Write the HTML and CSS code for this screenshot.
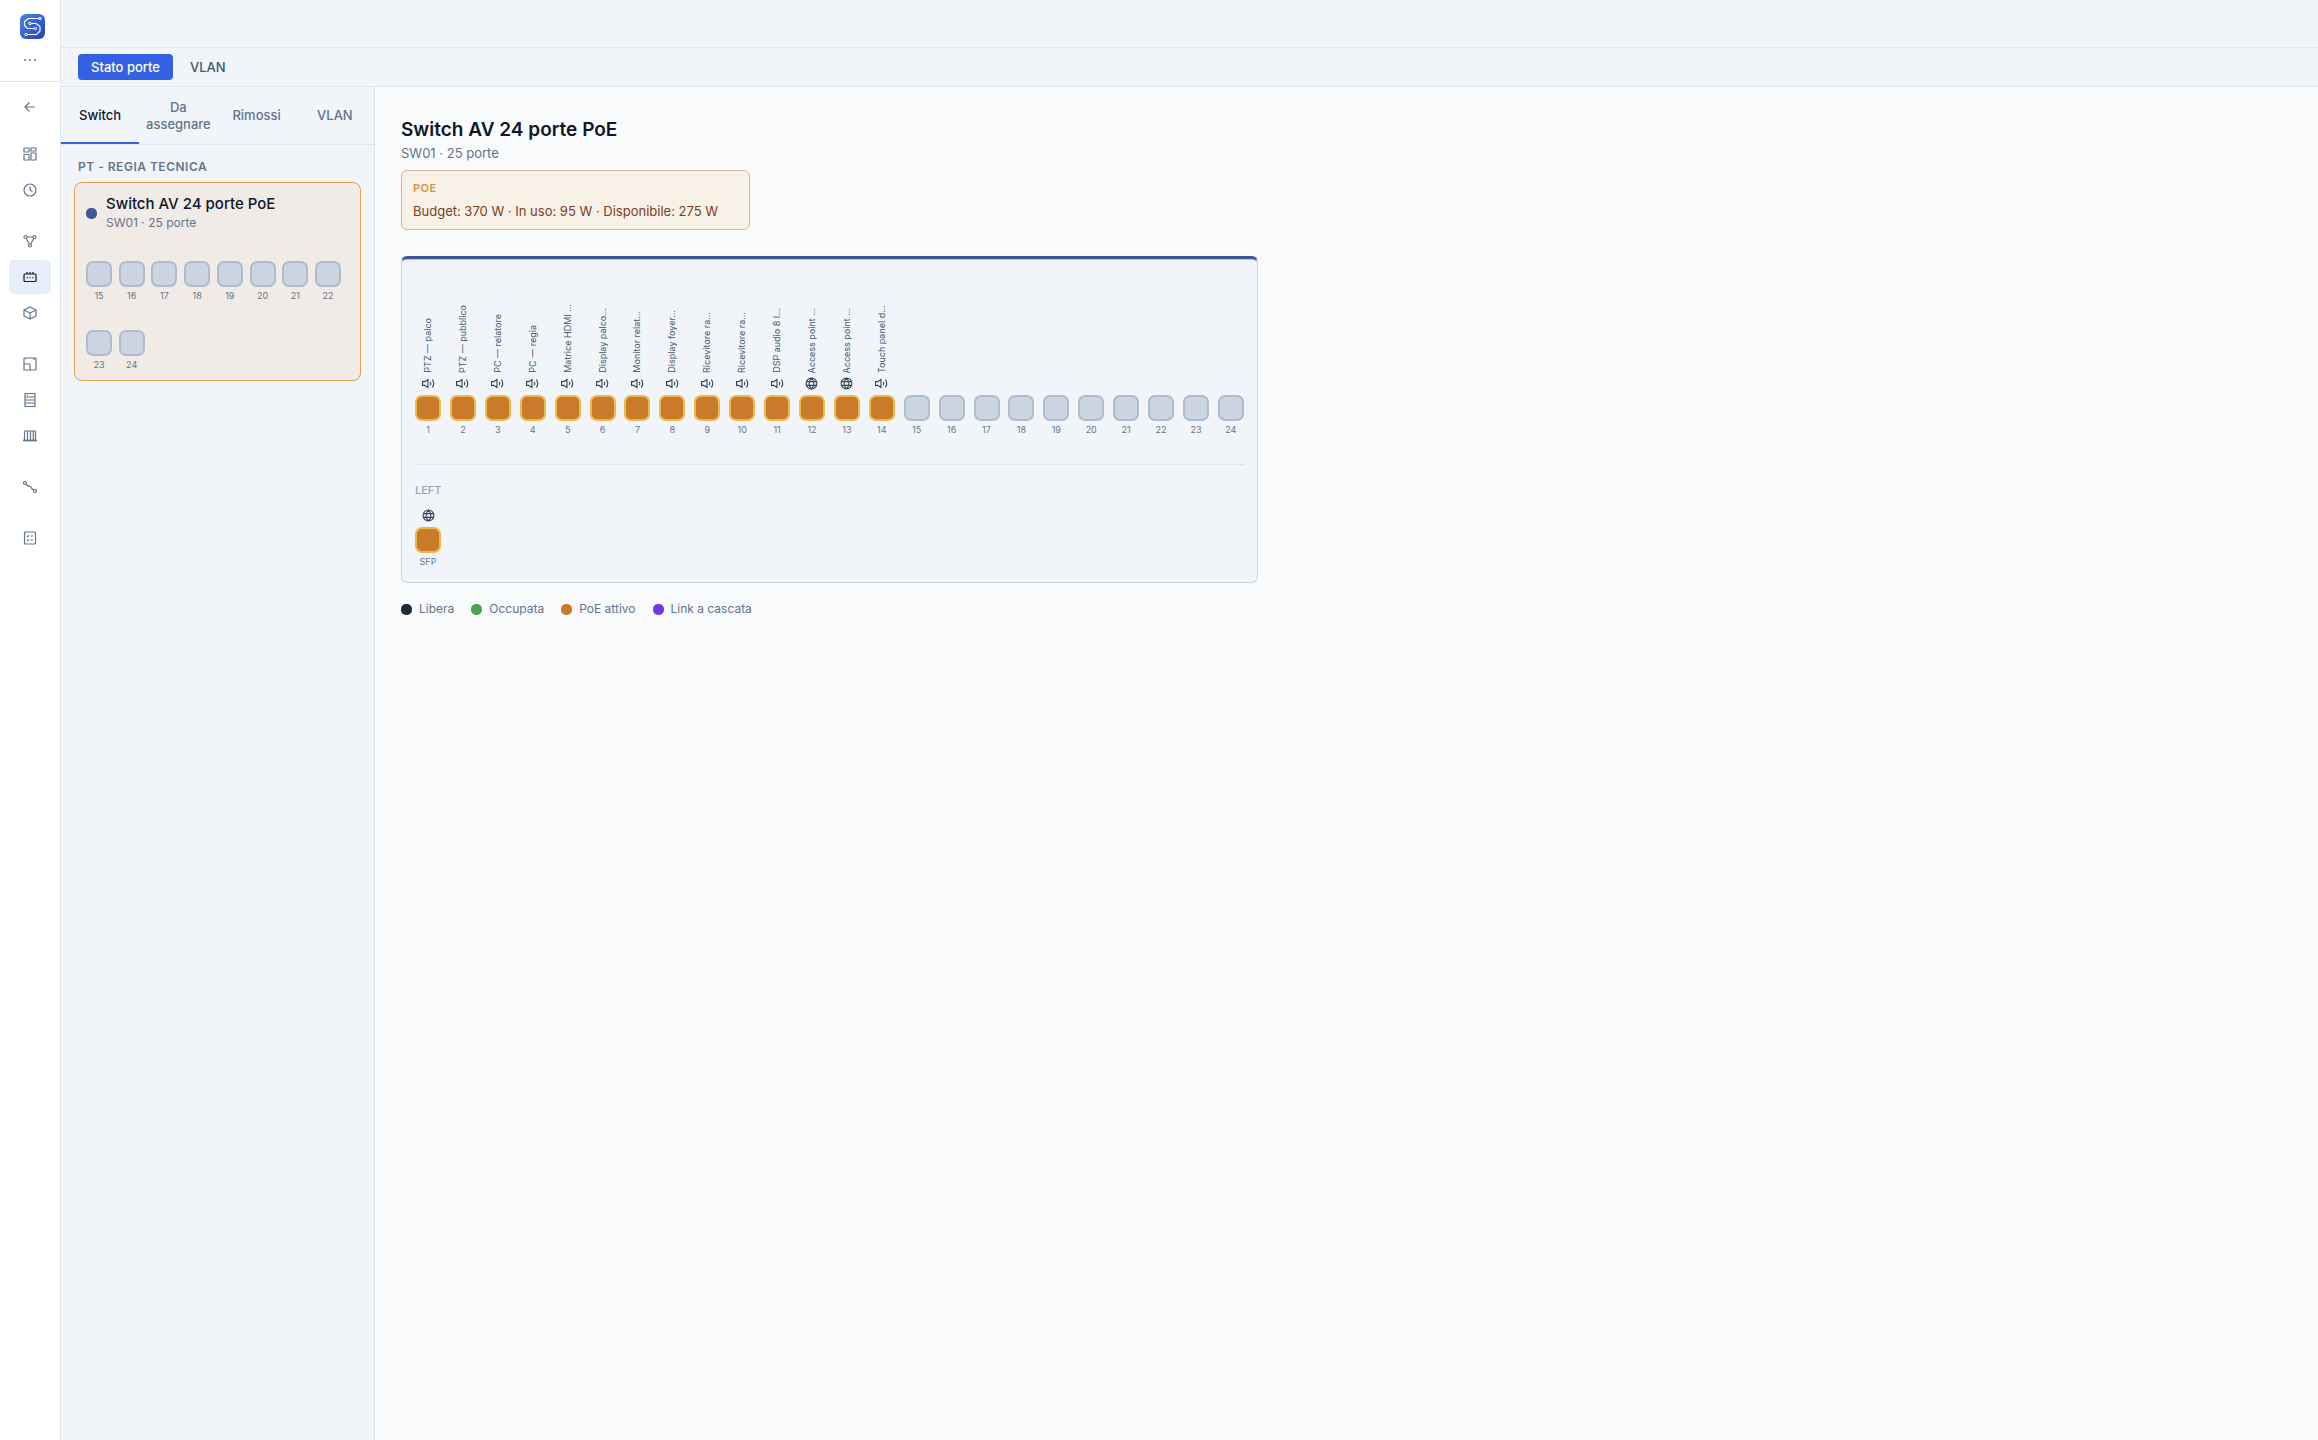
FILE: index.html
```
<!DOCTYPE html>
<html lang="it">
<head>
    <meta charset="UTF-8">
    <meta name="viewport" content="width=device-width, initial-scale=1.0">
    <title>Switch - Stato porte</title>

    <link rel="stylesheet" href="styles.css">
</head>
<body>
    <!-- simboli usati sopra le porte -->
    <svg class="symbols" aria-hidden="true">
        <symbol id="speaker" viewBox="0 0 24 24">
            <path d="M1 8.500h4l6-4v15l-6-4H1z"/>
            <path d="M15 9q2.500 3 0 6M19 5q5.500 7 0 14"/>
        </symbol>
        <symbol id="globe" viewBox="0 0 24 24">
            <circle cx="12" cy="12" r="10"/>
            <path d="M2.500 8.500h19M2.500 15.500h19M12 2c-6 6-6 14 0 20M12 2c6 6 6 14 0 20"/>
        </symbol>
    </svg>

    <aside class="sidebar">
        <div class="brand">
            <svg class="logo" viewBox="0 0 25 25">
                <defs>
                    <linearGradient id="logo-bg" x1="0" y1="0" x2="1" y2="1">
                        <stop offset="0" stop-color="#4a86ec"/>
                        <stop offset="1" stop-color="#2440b4"/>
                    </linearGradient>
                </defs>
                <rect width="25" height="25" rx="6" fill="url(#logo-bg)"/>
                <path d="M19 4.500H8.500L4.500 7.500V11.500L7.500 14.500H14.500M11 9.500H16L20 12.500V17L16.500 20.500H7" fill="none" stroke="#fff" stroke-width="1.100" stroke-linejoin="round"/>
                <g fill="#3b6fe0" stroke="#fff"><circle cx="20" cy="4.500" r="1.200"/><circle cx="10" cy="9.500" r="1.200"/><circle cx="15.500" cy="14.500" r="1.200"/><circle cx="6" cy="20.500" r="1.200"/></g>
            </svg>
            <button class="more" aria-label="Altro"><i></i><i></i><i></i></button>
        </div>
        <nav class="menu">
            <div class="group">
                <a href="#" class="item" aria-label="Indietro"><svg viewBox="0 0 14 14"><path d="M12 7H2M6.500 2.500L2 7l4.500 4.500"/></svg></a>
            </div>
            <div class="group">
                <a href="#" class="item" aria-label="Dashboard"><svg viewBox="0 0 14 14"><path d="M1 1h5v4H1zM8 1h5v3H8zM1 7.500h5V13H1zM8 6h5v7H8z"/></svg></a>
                <a href="#" class="item" aria-label="Cronologia"><svg viewBox="0 0 14 14"><circle cx="7" cy="7" r="6"/><path d="M7 3.500V7l2.500 1.500"/></svg></a>
            </div>
            <div class="group">
                <a href="#" class="item" aria-label="Schema"><svg viewBox="0 0 14 14"><circle cx="2.500" cy="3" r="1.500"/><circle cx="11.500" cy="3" r="1.500"/><circle cx="7" cy="11.500" r="1.500"/><path d="M4 3h6M3.300 4.500L6.200 10M10.700 4.500L7.800 10"/></svg></a>
                <a href="#" class="item active" aria-label="Switch"><svg viewBox="0 0 14 14"><rect x="1" y="4" width="12" height="7.500" rx="1"/><path d="M4 4V2M7 4V2M10 4V2M3.700 7.700h1M6.500 7.700h1M9.300 7.700h1"/></svg></a>
                <a href="#" class="item" aria-label="Dispositivi"><svg viewBox="0 0 14 14"><path d="M7 1l6 3v6l-6 3-6-3V4zM1 4l6 3 6-3M7 7v6"/></svg></a>
            </div>
            <div class="group">
                <a href="#" class="item" aria-label="Planimetria"><svg viewBox="0 0 14 14"><path d="M1 1h12v12H1zM1 7h6v6M11 1v2M3 1v1"/></svg></a>
                <a href="#" class="item" aria-label="Rack"><svg viewBox="0 0 14 14"><path d="M2 0.500h10v13H2zM2 4h10M2 7h10M2 10h10M4 2.300h1"/></svg></a>
                <a href="#" class="item" aria-label="Patch panel"><svg viewBox="0 0 14 14"><path d="M1.500 11V2h11v9M4.500 2v9M7.500 2v9M10.300 2v9"/><path d="M0 11.500h14" stroke-width="1.800"/></svg></a>
            </div>
            <div class="group">
                <a href="#" class="item" aria-label="Cavi"><svg viewBox="0 0 14 14"><circle cx="2" cy="3" r="1.500"/><circle cx="12" cy="11" r="1.500"/><path d="M3.300 4c1.500 4 4 0.500 5 3.500q.5 2 2.400 2.500"/></svg></a>
            </div>
            <div class="group">
                <a href="#" class="item" aria-label="Checklist"><svg viewBox="0 0 14 14"><rect x="1.500" y="1" width="11" height="12" rx="1"/><path d="M4 5l.7.700L6 4.300M7.500 5H10M4 9l.7.700L6 8.300M7.500 9H10"/></svg></a>
            </div>
        </nav>
    </aside>

    <div class="page">
        <header class="topbar"></header>
        <nav class="subbar">
            <button class="pill selected">Stato porte</button>
            <button class="pill">VLAN</button>
        </nav>

        <div class="content">
            <section class="list">
                <div class="tabs">
                    <button class="tab current">Switch</button>
                    <button class="tab">Da assegnare</button>
                    <button class="tab">Rimossi</button>
                    <button class="tab">VLAN</button>
                </div>
                <h3 class="room">PT - REGIA TECNICA</h3>
                <div class="card">
                    <div class="card-head">
                        <span class="dot blue"></span>
                        <div>
                            <h4>Switch AV 24 porte PoE</h4>
                            <p>SW01 · 25 porte</p>
                        </div>
                    </div>
                    <div class="mini-ports" id="mini"></div>
                </div>
            </section>

            <main class="detail">
                <h1>Switch AV 24 porte PoE</h1>
                <p class="sub">SW01 · 25 porte</p>
                <div class="poe">
                    <h5>POE</h5>
                    <p>Budget: 370 W · In uso: 95 W · Disponibile: 275 W</p>
                </div>

                <div class="switch">
                    <div class="ports" id="ports"></div>
                    <div class="side">
                        <h6>LEFT</h6>
                        <div class="ports" id="left"></div>
                    </div>
                </div>

                <ul class="legend">
                    <li><span class="dot dark"></span>Libera</li>
                    <li><span class="dot green"></span>Occupata</li>
                    <li><span class="dot orange"></span>PoE attivo</li>
                    <li><span class="dot purple"></span>Link a cascata</li>
                </ul>
            </main>
        </div>
    </div>

    <script src="script.js"></script>
</body>
</html>
```
FILE: styles.css
```
* {
    box-sizing: border-box;
    padding: 0;
    margin: 0;
}

body {
    display: flex;
    min-height: 100vh;
    font-family: Inter, Arial, sans-serif;
    font-size: 13px;
    color: #64748b;
    background: #f8fafc;
}

button {
    font: inherit;
    color: inherit;
    border: none;
    background: none;
    cursor: pointer;
}

.symbols {
    display: none;
}

/* barra laterale */
.sidebar {
    width: 61px;
    flex-shrink: 0;
    background: #fff;
    border-right: 1px solid #dde5ef;
}

.brand {
    display: flex;
    flex-direction: column;
    align-items: center;
    gap: 14px;
    height: 82px;
    padding: 14px 0 0 5px;
    border-bottom: 1px solid #dde5ef;
}

.logo {
    width: 25px;
    height: 25px;
}

.more {
    display: flex;
    gap: 3px;
    padding: 6px 5px 6px 0;
}

.more i {
    width: 2px;
    height: 2px;
    border-radius: 1px;
    background: #64748b;
}

.menu {
    display: flex;
    flex-direction: column;
    gap: 17px;
    padding: 8px 9px;
}

.group {
    display: flex;
    flex-direction: column;
    gap: 2px;
}

.group:first-child {
    margin-bottom: -4px;
}

.item {
    display: flex;
    align-items: center;
    justify-content: center;
    height: 34px;
    border-radius: 5px;
    color: #64748b;
}

.item svg {
    width: 14px;
    height: 14px;
    fill: none;
    stroke: currentColor;
    stroke-width: 1.2;
    stroke-linejoin: round;
}

.item.active {
    background: #e8edfb;
    color: #0f172a;
}

/* intestazioni */
.page {
    flex: 1;
    display: flex;
    flex-direction: column;
    min-width: 0;
}

.topbar {
    height: 48px;
    background: #f1f5fa;
    border-bottom: 1px solid #dde5ef;
}

.subbar {
    display: flex;
    gap: 4px;
    padding: 6px 17px;
    background: #f1f5fa;
    border-bottom: 1px solid #dde5ef;
}

.pill {
    height: 26px;
    padding: 0 13px;
    border-radius: 4px;
    font-weight: 500;
    color: #475569;
}

.pill.selected {
    background: #3461e4;
    color: #fff;
}

.content {
    flex: 1;
    display: flex;
}

/* elenco switch */
.list {
    width: 314px;
    flex-shrink: 0;
    background: #f1f5fa;
    border-right: 1px solid #dde5ef;
}

.tabs {
    display: grid;
    grid-template-columns: repeat(4, 1fr);
    height: 58px;
    border-bottom: 1px solid #dde5ef;
}

.tab {
    padding-top: 2px;
    line-height: 17px;
    font-weight: 500;
    border-bottom: 2px solid transparent;
}

.tab.current {
    color: #0f172a;
    border-color: #3461e4;
}

.room {
    padding: 14px 17px 8px;
    font-size: 12px;
    line-height: 15px;
    font-weight: 600;
    letter-spacing: 0.5px;
}

.card {
    margin: 0 13px;
    padding: 11px 19px 7px 11px;
    border: 1px solid #e0a050;
    border-radius: 8px;
    background: #f0ebe6;
}

.card-head {
    display: flex;
    align-items: center;
    gap: 9px;
}

.card h4 {
    font-size: 15px;
    line-height: 19px;
    font-weight: 500;
    color: #0f172a;
}

.card p {
    font-size: 12px;
    line-height: 20px;
}

.dot {
    width: 11px;
    height: 11px;
    border-radius: 5px;
}

.blue { background: #3f569b; }
.dark { background: #1e293b; }
.green { background: #4ba154; }
.orange { background: #c97b2b; }
.purple { background: #7239e0; }

.mini-ports {
    display: grid;
    grid-template-columns: repeat(8, 26px);
    justify-content: space-between;
    row-gap: 26px;
    margin-top: 28px;
}

/* porte */
.port {
    display: flex;
    flex-direction: column;
    align-items: center;
    justify-content: flex-end;
    width: 26px;
    font-size: 9px;
}

.port .led {
    width: 26px;
    height: 26px;
    border: 2px solid #b0bccb;
    border-radius: 7px;
    background: #cbd5e1;
}

.port.poe-on .led {
    border-color: #ecb949;
    background: #c97b2b;
}

.port .num {
    line-height: 17px;
}

.port .icon {
    width: 13px;
    height: 13px;
    margin: 4px 0 5px;
    fill: none;
    stroke: #334155;
    stroke-width: 2;
}

.port .label {
    writing-mode: vertical-rl;
    transform: rotate(180deg);
    line-height: 12px;
    color: #475569;
    white-space: nowrap;
}

/* dettaglio */
.detail {
    flex: 1;
    padding: 30px 26px;
}

.detail h1 {
    font-size: 19px;
    line-height: 26px;
    font-weight: 600;
    color: #0f172a;
}

.sub {
    line-height: 20px;
}

.poe {
    width: 349px;
    margin-top: 7px;
    padding: 10px 11px 8px;
    border: 1px solid #d3b6a0;
    border-radius: 6px;
    background: #f8f1e7;
    color: #78401d;
}

.poe h5 {
    font-size: 11px;
    line-height: 14px;
    font-weight: 600;
    letter-spacing: 0.5px;
    color: #d4914a;
}

.poe p {
    margin-top: 6px;
    line-height: 20px;
}

.switch {
    width: 857px;
    margin-top: 26px;
    padding: 0 13px 12px;
    border: 1px solid #cbd5e8;
    border-top: 3px solid #3f569b;
    border-radius: 6px;
    background: #f1f5fa;
    box-shadow: inset 0 1px #b4c4ec;
}

.ports {
    display: flex;
    justify-content: space-between;
}

.switch > .ports {
    height: 179px;
}

.side {
    margin-top: 26px;
    padding-top: 18px;
    border-top: 1px solid #dde5ef;
}

.side h6 {
    font-size: 11px;
    line-height: 14px;
    font-weight: 500;
    color: #94a3b8;
}

.side .ports {
    margin-top: 8px;
}

.legend {
    display: flex;
    gap: 17px;
    margin-top: 18px;
    list-style: none;
    font-size: 12px;
    line-height: 16px;
}

.legend li {
    display: flex;
    align-items: center;
    gap: 7px;
}
```
FILE: script.js
```
var labels = ['PTZ — palco', 'PTZ — pubblico', 'PC — relatore', 'PC — regia', 'Matrice HDMI ...',
    'Display palco...', 'Monitor relat...', 'Display foyer...', 'Ricevitore ra...', 'Ricevitore ra...',
    'DSP audio 8 I...', 'Access point ...', 'Access point ...', 'Touch panel d...'];

function port(num, label, icon) {
    var html = '<div class="port' + (icon ? ' poe-on' : '') + '">';
    if (label) html += '<span class="label">' + label + '</span>';
    if (icon) html += '<svg class="icon" viewBox="0 0 24 24"><use href="#' + icon + '"/></svg>';
    return html + '<button class="led" aria-label="Porta ' + num + '"></button><span class="num">' + num + '</span></div>';
}

var ports = '';
var mini = '';
for (var i = 1; i <= 24; i++) {
    var icon = i > 14 ? '' : (i == 12 || i == 13 ? 'globe' : 'speaker');
    ports += port(i, labels[i - 1], icon);
    if (i > 14) mini += port(i);
}

document.getElementById('ports').innerHTML = ports;
document.getElementById('mini').innerHTML = mini;
document.getElementById('left').innerHTML = port('SFP', '', 'globe');
```
